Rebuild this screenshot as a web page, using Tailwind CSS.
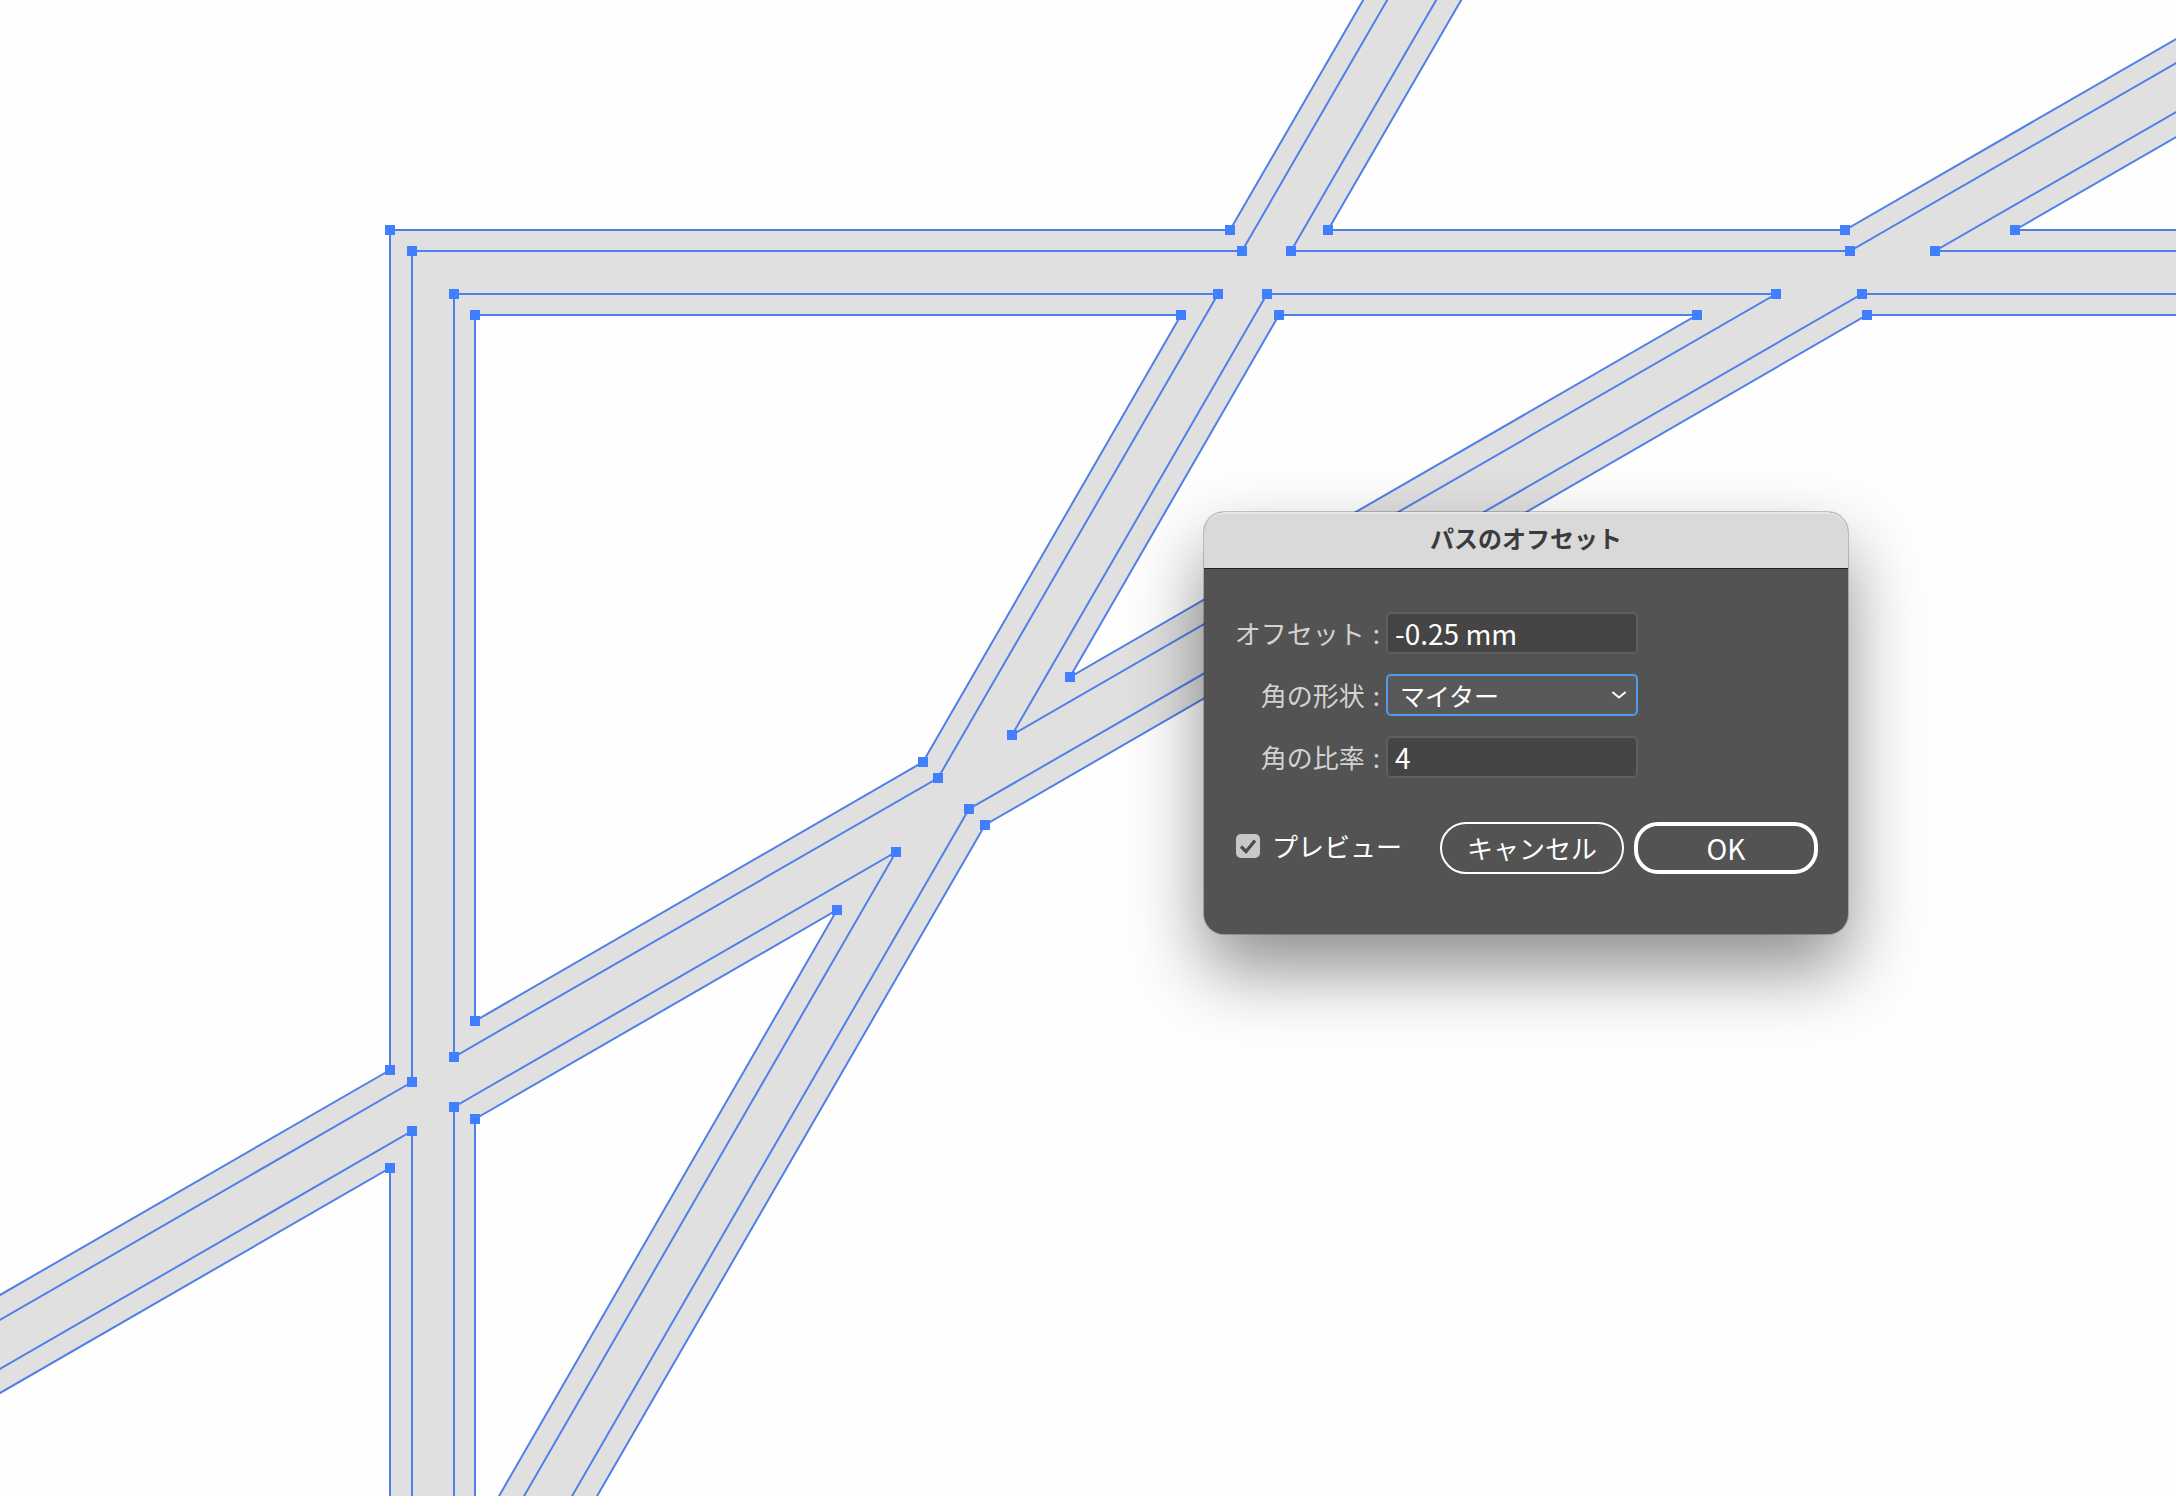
<!DOCTYPE html>
<html lang="ja">
<head>
  <meta charset="utf-8" />
  <meta content="width=device-width, initial-scale=1" name="viewport" />
  <title>パスのオフセット</title>
  <script src="https://cdn.jsdelivr.net/npm/@tailwindcss/browser@4"></script>
</head>
<body class="min-h-screen relative overflow-hidden bg-white font-['Noto_Sans_CJK_JP',sans-serif]">
  <!-- Artboard -->
  <svg
    class="block w-full h-screen bg-[#e0e0e0]"
    viewBox="0 0 2176 1496"
    preserveAspectRatio="xMinYMin slice"
    aria-hidden="true"
  >
    <!-- Original outline: the white areas between the bars -->
    <g fill="#fefefe" stroke="#4f80e8" stroke-width="2">
      <path d="M-52 1325L390 1070V230H1230L1369 -10H-52Z" />
      <path d="M1467 -10L1328 230H1845L2197 27V-10Z" />
      <path d="M2197 125L2015 230H2197Z" />
      <path d="M1279 315H1697L1070 677Z" />
      <path d="M475 315H1181L923 762L475 1021Z" />
      <path d="M-52 1423L390 1168V1510H-52Z" />
      <path d="M475 1510V1119L837 910L491 1510Z" />
      <path d="M589 1510L985 825L1867 315H2190V1510Z" />
    </g>

    <!-- Offset preview -->
    <g fill="none" stroke="#4f80e8" stroke-width="2">
      <path d="M-52 1350L412 1082V251H1242L1393 -10" />
      <path d="M1442 -10L1291 251H1850L2197 51" />
      <path d="M2197 100L1935 251H2197" />
      <path d="M1267 294H1776L1012 735Z" />
      <path d="M454 294H1218L938 778L454 1057Z" />
      <path d="M-52 1399L412 1131V1510" />
      <path d="M454 1510V1107L896 852L516 1510" />
      <path d="M564 1510L969 809L1862 294H2190" />
    </g>

    <!-- Anchor points -->
    <path
      fill="none"
      stroke="#4080ff"
      stroke-width="10"
      d="M385 230h10M407 251h10M449 294h10M470 315h10
         M1225 230h10M1323 230h10M1237 251h10M1286 251h10
         M1213 294h10M1262 294h10M1176 315h10M1274 315h10
         M1840 230h10M2010 230h10M1845 251h10M1930 251h10
         M1771 294h10M1857 294h10M1692 315h10M1862 315h10
         M918 762h10M933 778h10M1065 677h10M1007 735h10
         M964 809h10M980 825h10M891 852h10M832 910h10
         M385 1070h10M407 1082h10M407 1131h10M385 1168h10
         M470 1021h10M449 1057h10M449 1107h10M470 1119h10"
    />
  </svg>

  <!-- Offset Path Dialog -->
  <div
    role="dialog"
    aria-labelledby="dialog-title"
    class="absolute left-[1204px] top-[512px] w-[644px] rounded-[20px] bg-[#535353] shadow-[0_0_0_1px_rgba(0,0,0,0.2),0_36px_72px_rgba(0,0,0,0.44)]"
  >
    <header class="h-[57px] pb-[6px] flex items-center justify-center rounded-t-[20px] border-t-2 border-t-[#e6e6e6] border-b border-b-[#222222] bg-[#d9d9d9]">
      <h1 id="dialog-title" class="text-[24px] leading-8 font-bold text-[#3c3c3c]">パスのオフセット</h1>
    </header>

    <form class="pt-[43px] pb-[60px] pl-8 pr-[30px]" onsubmit="event.preventDefault()">
      <div class="grid grid-cols-[144px_252px] gap-x-[6px] gap-y-5 items-center text-[26px] leading-8 text-[#d2d2d2]">
        <label for="offset" class="flex justify-end gap-2 whitespace-nowrap"><span>オフセット</span><span>:</span></label>
        <input id="offset" type="text" value="-0.25 mm" class="w-full h-[42px] px-[7px] rounded-[5px] border-2 border-[#5f5f5f] bg-[#454545] text-[28px] text-white outline-none" />

        <label for="joins" class="flex justify-end gap-2 whitespace-nowrap"><span>角の形状</span><span>:</span></label>
        <div class="relative">
          <select id="joins" class="block w-full h-[42px] px-3 rounded-[5px] border-2 border-[#4f9ce8] bg-[#595959] text-[25px] text-white appearance-none outline-none">
            <option>マイター</option>
            <option>ラウンド</option>
            <option>ベベル</option>
          </select>
          <svg class="absolute right-[11px] top-4 w-4 h-3 pointer-events-none" viewBox="0 0 16 12" fill="none" stroke="#ffffff" stroke-width="2" stroke-linecap="round" stroke-linejoin="round">
            <path d="M2 2.500L8 7.500L14 2.500" />
          </svg>
        </div>

        <label for="miter" class="flex justify-end gap-2 whitespace-nowrap"><span>角の比率</span><span>:</span></label>
        <input id="miter" type="text" value="4" class="w-full h-[42px] px-[7px] rounded-[5px] border-2 border-[#5f5f5f] bg-[#454545] text-[28px] text-white outline-none" />
      </div>

      <div class="mt-11 flex items-center justify-between text-[26px] leading-8 text-white">
        <label for="preview" class="flex items-center gap-3 pb-1">
          <span class="relative block w-6 h-6">
            <input id="preview" type="checkbox" checked class="block w-6 h-6 rounded-[5px] bg-[#c8c8c8] appearance-none" />
            <svg class="absolute inset-0 w-6 h-6 pointer-events-none" viewBox="0 0 24 24" fill="none" stroke="#4c4c4c" stroke-width="3.200">
              <path d="M5 12.500L10 17.500L19 6.500" />
            </svg>
          </span>
          <span>プレビュー</span>
        </label>
        <div class="flex gap-[10px]">
          <button type="button" class="w-[184px] h-[52px] rounded-full border-2 border-white">キャンセル</button>
          <button type="submit" class="w-[184px] h-[52px] rounded-[24px] border-4 border-white text-[28px]">OK</button>
        </div>
      </div>
    </form>
  </div>
</body>
</html>
